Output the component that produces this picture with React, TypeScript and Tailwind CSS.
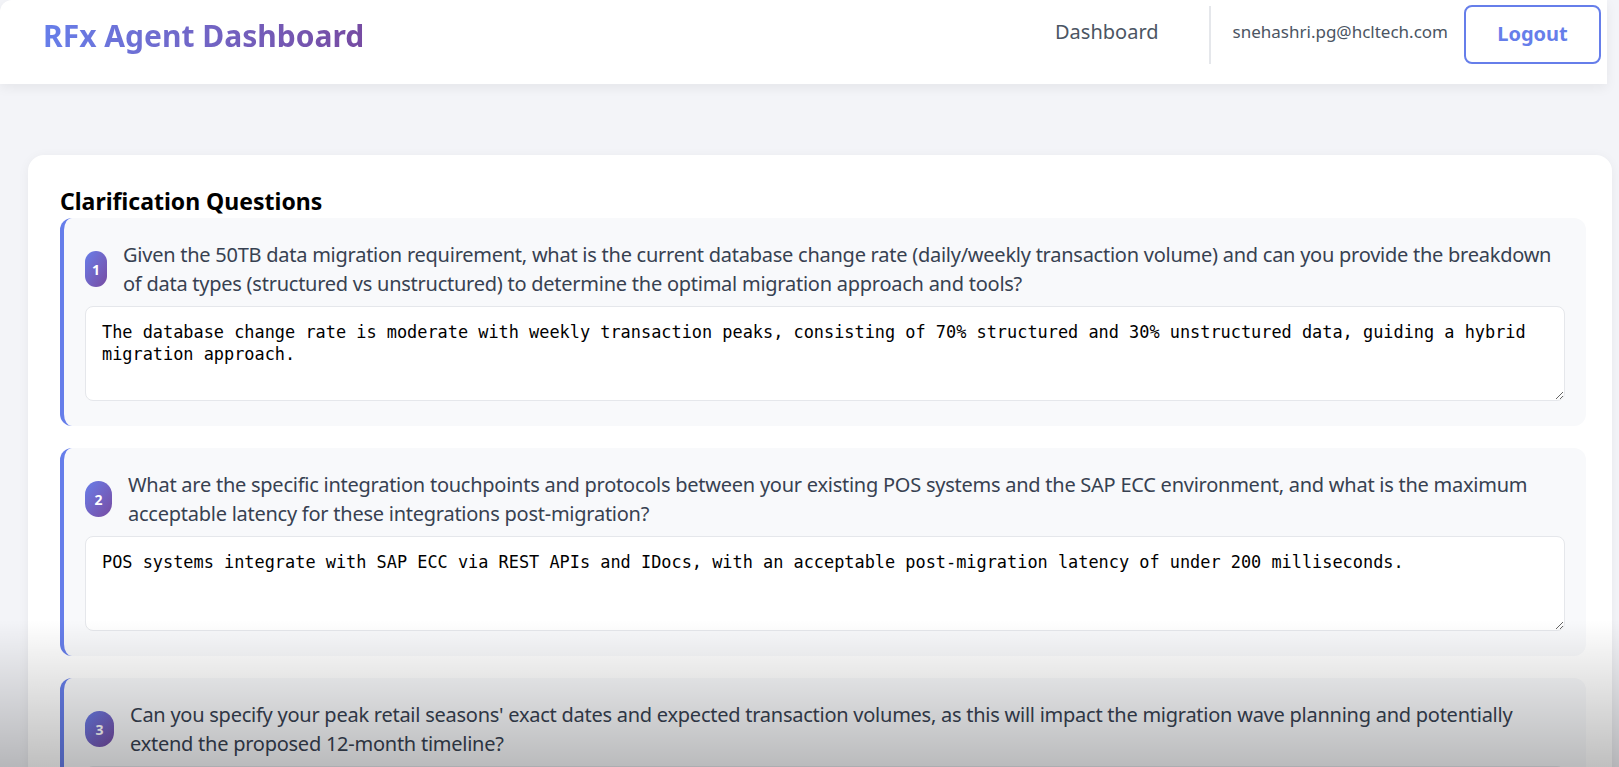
import { useState } from "react";

const QUESTIONS = [
  {
    q: "Given the 50TB data migration requirement, what is the current database change rate (daily/weekly transaction volume) and can you provide the breakdown of data types (structured vs unstructured) to determine the optimal migration approach and tools?",
    a: "The database change rate is moderate with weekly transaction peaks, consisting of 70% structured and 30% unstructured data, guiding a hybrid migration approach.",
    badge: "w-[22px]",
  },
  {
    q: "What are the specific integration touchpoints and protocols between your existing POS systems and the SAP ECC environment, and what is the maximum acceptable latency for these integrations post-migration?",
    a: "POS systems integrate with SAP ECC via REST APIs and IDocs, with an acceptable post-migration latency of under 200 milliseconds.",
    badge: "w-[27px]",
  },
  {
    q: "Can you specify your peak retail seasons' exact dates and expected transaction volumes, as this will impact the migration wave planning and potentially extend the proposed 12-month timeline?",
    a: "Peak seasons run from mid-November through early January, with transaction volumes up to three times the normal weekly average.",
    badge: "w-[29px]",
  },
];

function QuestionCard({ index, q, a, badge }: { index: number; q: string; a: string; badge: string }) {
  const [value, setValue] = useState(a);
  return (
    <div className="bg-[#f8f9fb] border-l-4 border-[#667eea] rounded-xl pl-[21px] pr-[18px] pt-[22px] pb-[25px]">
      <div className="flex items-center gap-4 mb-[8px]">
        <div
          className={`${badge} h-[36px] flex-shrink-0 rounded-full bg-gradient-to-br from-[#667eea] to-[#764ba2] flex items-center justify-center text-white text-[14px] font-bold`}
        >
          {index}
        </div>
        <p className="text-[20px] leading-[29px] tracking-[-0.25px] text-[#374151]">{q}</p>
      </div>
      <textarea
        value={value}
        onChange={(e) => setValue(e.target.value)}
        className="block w-[calc(100%-3px)] h-[95px] bg-white border border-[#e5e7eb] rounded-lg px-[16px] py-[14px] text-[16.9px] leading-[22px] text-black outline-none resize-y"
        style={{ fontFamily: '"DejaVu Sans Mono", "Liberation Mono", monospace' }}
      />
    </div>
  );
}

export default function App() {
  return (
    <div className="relative min-h-screen bg-[#f3f4f8] overflow-hidden" style={{ fontFamily: '"Noto Sans", "Open Sans", sans-serif' }}>
      <header className="bg-white h-[84px] rounded-tl-xl mr-[12px] flex items-center justify-between pl-[43px] pr-[6px] shadow-[0_4px_12px_rgba(0,0,0,0.06)]">
        <h1 className="text-[30px] font-bold bg-gradient-to-r from-[#667eea] to-[#764ba2] bg-clip-text text-transparent -mt-[14px]">
          RFx Agent Dashboard
        </h1>
        <div className="flex items-center h-full -mt-[20px]">
          <span className="text-[20px] text-[#4b5563] mr-[50px]">Dashboard</span>
          <div className="w-[2px] h-[58px] bg-[#e5e7eb] mt-[6px]" />
          <span className="text-[17px] text-[#4b5563] ml-[22px] mr-[16px]">snehashri.pg@hcltech.com</span>
          <button className="h-[59px] w-[137px] mt-[4px] border-2 border-[#667eea] rounded-lg text-[20px] font-bold text-[#667eea]">
            Logout
          </button>
        </div>
      </header>

      <main className="pt-[71px] pl-[28px] pr-[7px]">
        <div className="bg-white rounded-2xl shadow-[0_2px_12px_rgba(0,0,0,0.05)] pl-[32px] pr-[26px] pt-[30px] pb-8">
          <h2 className="text-[23px] font-bold text-black leading-[32px] mb-[1px]">Clarification Questions</h2>
          <div className="flex flex-col gap-[22px]">
            {QUESTIONS.map((item, i) => (
              <QuestionCard key={i} index={i + 1} q={item.q} a={item.a} badge={item.badge} />
            ))}
          </div>
        </div>
      </main>

      <div className="pointer-events-none absolute left-0 right-0 top-[620px] h-[147px] bg-gradient-to-b from-transparent to-black/25" />
    </div>
  );
}
